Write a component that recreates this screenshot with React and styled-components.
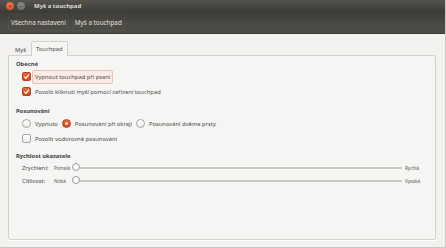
import styled, { createGlobalStyle } from "styled-components";

const Global = createGlobalStyle`
  html, body { margin: 0; padding: 0; background: #f2f1f0; }
  body { font-family: "Noto Sans", "DejaVu Sans", sans-serif; }
`;

const Window = styled.div`
  width: 446px;
  height: 248px;
  display: flex;
  flex-direction: column;
  background: #f2f1f0;
  box-sizing: border-box;
  border-right: 1px solid #c9c7c3;
  border-bottom: 1px solid #c9c7c3;
  overflow: hidden;
`;

const TitleBar = styled.div`
  height: 12px;
  display: flex;
  align-items: center;
  gap: 3px;
  padding-left: 6px;
  background: linear-gradient(#54534e, #3c3b37);
`;

const WinButton = styled.span`
  width: 8px;
  height: 8px;
  border-radius: 50%;
  display: flex;
  align-items: center;
  justify-content: center;
  color: #3c3b37;
  font-size: 6px;
  font-weight: bold;
  line-height: 1;
  background: ${(p) =>
    p.close
      ? "radial-gradient(circle at 50% 35%, #f27a53, #d6451c)"
      : "radial-gradient(circle at 50% 35%, #8d8c87, #65645f)"};
`;

const Title = styled.span`
  margin-left: 6px;
  color: #dfdbd2;
  font-size: 6px;
  font-weight: bold;
`;

const Toolbar = styled.div`
  height: 21px;
  display: flex;
  align-items: center;
  gap: 3px;
  padding-left: 8px;
  background: linear-gradient(#3d3c38, #4b4a45 60%, #4d4c47);
  border-bottom: 1px solid #3a3935;
`;

const ToolButton = styled.span`
  color: #e4e1dc;
  font-size: 6.3px;
  padding: 3px 2px;
  border: 1px solid rgba(255, 255, 255, 0.04);
  border-radius: 2px;
`;

const Content = styled.div`
  flex: 1;
  display: flex;
  flex-direction: column;
  padding: 9px 9px 7px 8px;
`;

const Tabs = styled.div`
  display: flex;
  align-items: flex-end;
  padding-left: 2px;
  height: 12px;
`;

const Tab = styled.span`
  font-size: 5.8px;
  color: #4a4a4a;
  padding: ${(p) => (p.active ? "3px 4px 3px" : "2px 4px 2px")};
  background: ${(p) => (p.active ? "#f5f5f4" : "transparent")};
  border: 1px solid ${(p) => (p.active ? "#d3d1cd" : "transparent")};
  border-bottom: none;
  border-radius: 2px 2px 0 0;
  margin-bottom: -1px;
  position: relative;
  z-index: 1;
`;

const Panel = styled.div`
  flex: 1;
  background: #f5f5f4;
  border: 1px solid #d3d1cd;
  border-radius: 0 2px 2px 2px;
  padding: 4px 8px 0 7px;
  display: flex;
  flex-direction: column;
  box-shadow: 0 1px 0 #fff;
`;

const Heading = styled.div`
  font-size: 5.8px;
  font-weight: bold;
  color: #3c3c3c;
  height: 9px;
  line-height: 9px;
  margin-top: ${(p) => p.gap || 0}px;
`;

const Row = styled.div`
  display: flex;
  align-items: center;
  gap: ${(p) => p.gap || 0}px;
  padding-left: 6px;
  height: 15px;
`;

const Label = styled.span`
  font-size: 5.8px;
  color: #4a4a4a;
  padding: 2px 2px;
  border-radius: 2px;
  border: 1px solid ${(p) => (p.focus ? "#ecc0ae" : "transparent")};
  background: ${(p) => (p.focus ? "#f9ece6" : "transparent")};
`;

const Box = styled.span`
  width: 9px;
  height: 9px;
  box-sizing: border-box;
  border-radius: 2px;
  display: flex;
  align-items: center;
  justify-content: center;
  background: ${(p) =>
    p.checked ? "linear-gradient(#e8683a, #cf4a1d)" : "linear-gradient(#fff, #ecebe9)"};
  border: 1px solid ${(p) => (p.checked ? "#b8421b" : "#a8a6a2")};
`;

const Radio = styled.span`
  width: 9px;
  height: 9px;
  box-sizing: border-box;
  border-radius: 50%;
  display: flex;
  align-items: center;
  justify-content: center;
  background: ${(p) =>
    p.checked ? "linear-gradient(#e8683a, #cf4a1d)" : "linear-gradient(#fff, #ecebe9)"};
  border: 1px solid ${(p) => (p.checked ? "#b8421b" : "#a8a6a2")};
  &::after {
    content: "";
    display: ${(p) => (p.checked ? "block" : "none")};
    width: 3px;
    height: 3px;
    border-radius: 50%;
    background: #f7d9cc;
  }
`;

const RadioItem = styled.span`
  display: flex;
  align-items: center;
  gap: 1px;
  margin-right: 1px;
`;

const SliderRow = styled.div`
  display: grid;
  grid-template-columns: 32px 18px 1fr 22px;
  align-items: center;
  padding-left: 6px;
  height: 13px;
`;

const SliderName = styled.span`
  font-size: 5.8px;
  color: #4a4a4a;
`;

const SliderEnd = styled.span`
  font-size: 4.6px;
  color: #555;
  text-align: ${(p) => p.align || "left"};
`;

const Track = styled.div`
  position: relative;
  height: 2px;
  background: #c8c7c4;
  border-radius: 1px;
  margin-right: 3px;
`;

const Knob = styled.span`
  position: absolute;
  left: 0;
  top: -4px;
  width: 8px;
  height: 8px;
  box-sizing: border-box;
  border-radius: 50%;
  background: #fafafa;
  border: 1px solid #9d9b97;
`;

const Check = () => (
  <svg width="7" height="7" viewBox="0 0 7 7">
    <path d="M1.2 3.6 L2.9 5.2 L5.9 1.6" fill="none" stroke="#fff" strokeWidth="1.3" />
  </svg>
);

const Slider = ({ name, low, high }) => (
  <SliderRow>
    <SliderName>{name}</SliderName>
    <SliderEnd>{low}</SliderEnd>
    <Track>
      <Knob />
    </Track>
    <SliderEnd>{high}</SliderEnd>
  </SliderRow>
);

export default function App() {
  return (
    <>
      <Global />
      <Window>
        <TitleBar>
          <WinButton close>×</WinButton>
          <WinButton>–</WinButton>
          <Title>Myš a touchpad</Title>
        </TitleBar>
        <Toolbar>
          <ToolButton>Všechna nastavení</ToolButton>
          <ToolButton>Myš a touchpad</ToolButton>
        </Toolbar>
        <Content>
          <Tabs>
            <Tab>Myš</Tab>
            <Tab active>Touchpad</Tab>
          </Tabs>
          <Panel>
            <Heading>Obecné</Heading>
            <Row gap={1}>
              <Box checked>
                <Check />
              </Box>
              <Label focus>Vypnout touchpad při psaní</Label>
            </Row>
            <Row gap={1}>
              <Box checked>
                <Check />
              </Box>
              <Label>Povolit kliknutí myší pomocí zařízení touchpad</Label>
            </Row>
            <Heading gap={8}>Posunování</Heading>
            <Row>
              <RadioItem>
                <Radio />
                <Label>Vypnuto</Label>
              </RadioItem>
              <RadioItem>
                <Radio checked />
                <Label>Posunování při okraji</Label>
              </RadioItem>
              <RadioItem>
                <Radio />
                <Label>Posunování dvěma prsty</Label>
              </RadioItem>
            </Row>
            <Row gap={1}>
              <Box />
              <Label>Povolit vodorovné posunování</Label>
            </Row>
            <Heading gap={6}>Rychlost ukazatele</Heading>
            <Slider name="Zrychlení:" low="Pomalá" high="Rychlá" />
            <Slider name="Citlivost:" low="Nízká" high="Vysoká" />
          </Panel>
        </Content>
      </Window>
    </>
  );
}
